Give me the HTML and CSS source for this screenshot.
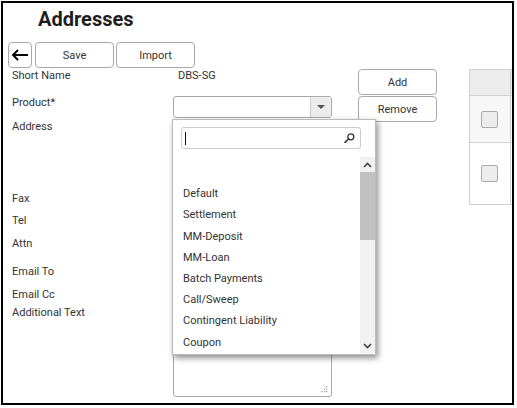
FILE: index.html
```html
<!DOCTYPE html>
<html>
<head>
<meta charset="utf-8">
<link rel="stylesheet" href="styles.css">
</head>
<body>
<div class="frame">
  <h1 class="title">Addresses</h1>
  <div class="toolbar">
    <button class="btn back" type="button">
      <svg width="18" height="12" viewBox="0 0 18 12"><path d="M17 6H2M7 1L2 6l5 5" fill="none" stroke="#000" stroke-width="2"/></svg>
    </button>
    <button class="btn wide" type="button">Save</button>
    <button class="btn wide gap2" type="button">Import</button>
  </div>
  <div class="main">
    <div class="form">
      <div class="lbl">Short Name</div><div class="val"><span class="text">DBS-SG</span></div>
      <div class="lbl">Product*</div><div class="val"><div class="select"><span class="sel-arrow"><span class="tri"></span></span></div></div>
      <div class="lbl">Address</div><div class="val"><div class="box addr"></div></div>
      <div class="lbl">Fax</div><div class="val"><div class="box inp"></div></div>
      <div class="lbl">Tel</div><div class="val"><div class="box inp"></div></div>
      <div class="lbl">Attn</div><div class="val"><div class="box inp"></div></div>
      <div class="lbl">Email To</div><div class="val"><div class="box inp"></div></div>
      <div class="lbl">Email Cc</div><div class="val"></div>
      <div class="lbl">Additional Text</div><div class="val"><div class="box area">
        <svg class="grip" width="7" height="7" viewBox="0 0 7 7"><g fill="#999"><rect x="5" y="0" width="1.2" height="1.2"/><rect x="3" y="2.5" width="1.2" height="1.2"/><rect x="5" y="2.5" width="1.2" height="1.2"/><rect x="0.5" y="5" width="1.2" height="1.2"/><rect x="3" y="5" width="1.2" height="1.2"/><rect x="5" y="5" width="1.2" height="1.2"/></g></svg>
      </div></div>
    </div>
    <div class="side-btns">
      <button class="btn wide" type="button">Add</button>
      <button class="btn wide" type="button">Remove</button>
    </div>
    <table class="grid">
      <tr class="head"><td class="c1"></td><td class="c2"></td></tr>
      <tr class="r1"><td class="c1"><span class="chk"></span></td><td class="c2"></td></tr>
      <tr class="r2"><td class="c1"><span class="chk"></span></td><td class="c2"></td></tr>
    </table>
  </div>

  <div class="popup">
    <div class="search">
      <span class="caret"></span>
      <svg class="mag" width="11" height="10" viewBox="0 0 11 10"><circle cx="6.8" cy="3.8" r="3" fill="none" stroke="#333" stroke-width="1.3"/><path d="M4.6 6L1 9.4" stroke="#333" stroke-width="1.6" stroke-linecap="round"/></svg>
    </div>
    <div class="scroll">
      <ul class="list">
        <li>&nbsp;</li>
        <li>Default</li>
        <li>Settlement</li>
        <li>MM-Deposit</li>
        <li>MM-Loan</li>
        <li>Batch Payments</li>
        <li>Call/Sweep</li>
        <li>Contingent Liability</li>
        <li>Coupon</li>
      </ul>
      <div class="sbar">
        <div class="sb-btn"><svg width="9" height="6" viewBox="0 0 9 6"><path d="M1 5L4.5 1.5 8 5" fill="none" stroke="#444" stroke-width="1.6"/></svg></div>
        <div class="sb-thumb"></div>
        <div class="sb-track"></div>
        <div class="sb-btn"><svg width="9" height="6" viewBox="0 0 9 6"><path d="M1 1L4.5 4.5 8 1" fill="none" stroke="#444" stroke-width="1.6"/></svg></div>
      </div>
    </div>
  </div>
</div>
</body>
</html>
```

FILE: styles.css
```css
* { box-sizing: border-box; }
html, body { margin: 0; padding: 0; background: #fff; }
body { font-family: Roboto, "Liberation Sans", Arial, sans-serif; font-size: 11px; color: #333; }

.frame {
  position: relative;
  margin: 1px 0 0 1px;
  width: 513px;
  height: 404px;
  border: 2px solid #000;
  overflow: hidden;
  background: #fff;
}

.title {
  margin: 4px 0 0 35px;
  font-size: 20px;
  line-height: 24px;
  font-weight: bold;
  color: #1e1e1e;
  height: 24px;
}

.toolbar {
  display: flex;
  margin-top: 11px;
  padding-left: 5px;
  height: 26px;
}

.btn {
  height: 26px;
  border: 1px solid #aaa;
  border-radius: 4px;
  background: #fff;
  font-family: Roboto, "Liberation Sans", Arial, sans-serif;
  font-size: 11px;
  color: #333;
  padding: 0;
  display: flex;
  align-items: center;
  justify-content: center;
}
.back { width: 24px; }
.wide { width: 79px; }
.toolbar .wide { margin-left: 3px; }
.toolbar .gap2 { margin-left: 2px; }

.main {
  display: flex;
  align-items: flex-start;
}

.form {
  margin-left: 9px;
  display: grid;
  grid-template-columns: 161px 159px;
  grid-template-rows: 27px 23.5px 72px 22.5px 23px 27.5px 23px 18.5px 92px;
}
.lbl { line-height: 14px; padding-top: 1px; color: #333; }
.val { position: relative; }
.text { display: block; line-height: 14px; padding-top: 1px; padding-left: 5px; }

.select {
  margin-top: 1px;
  height: 22px;
  border: 1px solid #aaa;
  border-radius: 3px;
  background: #fff;
  display: flex;
  justify-content: flex-end;
}
.sel-arrow {
  width: 21px;
  background: #ececec;
  border-left: 1px solid #ccc;
  border-radius: 0 3px 3px 0;
  display: flex;
  align-items: center;
  justify-content: center;
}
.tri {
  width: 0; height: 0;
  border-left: 4px solid transparent;
  border-right: 4px solid transparent;
  border-top: 4px solid #555;
}

.box { border: 1px solid #aaa; border-radius: 3px; background: #fff; }
.addr { margin-top: 2px; height: 66px; }
.inp { height: 20px; }
.area { height: 92px; position: relative; }
.grip { position: absolute; right: 3px; bottom: 3px; }

.side-btns {
  margin-left: 26px;
  margin-top: 1px;
  display: flex;
  flex-direction: column;
  gap: 1px;
}

.grid {
  margin-left: 32px;
  margin-top: 1px;
  border-collapse: collapse;
  flex: none;
}
.grid td { border: 1px solid #d0d0d0; padding: 0; }
.grid .c1 { width: 41px; text-align: center; vertical-align: middle; }
.grid .c2 { width: 80px; }
.head td { height: 26px; background: #ececec; }
.r1 td { height: 47px; background: #f7f7f7; }
.r2 td { height: 62px; background: #fff; }
.chk {
  display: inline-block;
  width: 17px; height: 17px;
  border: 1px solid #aaa;
  border-radius: 2px;
  background: #ececec;
  vertical-align: middle;
  margin-left: -2px;
}

.popup {
  position: absolute;
  left: 169px;
  top: 116px;
  width: 204px;
  height: 236px;
  border: 1px solid #bbb;
  background: #fff;
  box-shadow: 2px 3px 6px rgba(0,0,0,0.45);
}
.search {
  position: relative;
  margin: 7px 0 0 8px;
  width: 180px;
  height: 22px;
  border: 1px solid #ccc;
  border-radius: 3px;
  background: #fff;
}
.caret {
  position: absolute;
  left: 3px; top: 4px;
  width: 1px; height: 13px;
  background: #111;
}
.mag { position: absolute; right: 5px; top: 5px; }

.scroll {
  margin-top: 8px;
  height: 196px;
  display: flex;
}
.list {
  list-style: none;
  margin: 0;
  padding: 5px 0 0 10px;
  width: 187px;
  overflow: hidden;
}
.list li { line-height: 21.2px; height: 21.2px; color: #333; white-space: nowrap; }
.sbar {
  width: 15px;
  background: #f1f1f1;
  display: flex;
  flex-direction: column;
}
.sb-btn { height: 15px; display: flex; align-items: center; justify-content: center; }
.sb-thumb { height: 68px; background: #c1c1c1; margin: 0 0; }
.sb-track { flex: 1; }
```
